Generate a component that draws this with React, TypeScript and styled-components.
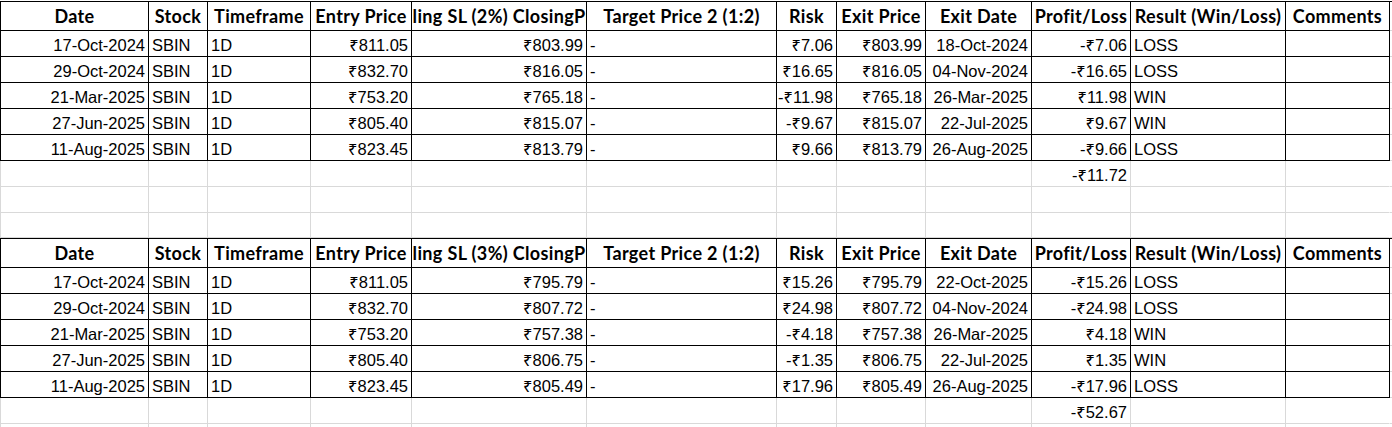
import styled, { createGlobalStyle } from "styled-components";

type Align = "left" | "right" | "center";
type Tone = "table" | "blank";

type Trade = {
  date: string;
  entry: string;
  stop: string;
  risk: string;
  exit: string;
  exitDate: string;
  pnl: string;
  result: string;
};

type Sheet = {
  stopLabel: string;
  trades: Trade[];
  total: string;
};

const COLUMNS = [148, 59, 103, 101, 175, 190, 60, 89, 106, 99, 155, 104];
const GRID = `${COLUMNS.map((w) => `${w}px`).join(" ")} 1fr`;
const GRID_LINE = "#d9d9d9";

const HEADERS = [
  "Date",
  "Stock",
  "Timeframe",
  "Entry Price",
  "",
  "Target Price 2 (1:2)",
  "Risk",
  "Exit Price",
  "Exit Date",
  "Profit/Loss",
  "Result (Win/Loss)",
  "Comments",
];

const SHEETS: Sheet[] = [
  {
    stopLabel: "Trailing SL (2%) ClosingPrice",
    total: "-₹11.72",
    trades: [
      { date: "17-Oct-2024", entry: "₹811.05", stop: "₹803.99", risk: "₹7.06", exit: "₹803.99", exitDate: "18-Oct-2024", pnl: "-₹7.06", result: "LOSS" },
      { date: "29-Oct-2024", entry: "₹832.70", stop: "₹816.05", risk: "₹16.65", exit: "₹816.05", exitDate: "04-Nov-2024", pnl: "-₹16.65", result: "LOSS" },
      { date: "21-Mar-2025", entry: "₹753.20", stop: "₹765.18", risk: "-₹11.98", exit: "₹765.18", exitDate: "26-Mar-2025", pnl: "₹11.98", result: "WIN" },
      { date: "27-Jun-2025", entry: "₹805.40", stop: "₹815.07", risk: "-₹9.67", exit: "₹815.07", exitDate: "22-Jul-2025", pnl: "₹9.67", result: "WIN" },
      { date: "11-Aug-2025", entry: "₹823.45", stop: "₹813.79", risk: "₹9.66", exit: "₹813.79", exitDate: "26-Aug-2025", pnl: "-₹9.66", result: "LOSS" },
    ],
  },
  {
    stopLabel: "Trailing SL (3%) ClosingPrice",
    total: "-₹52.67",
    trades: [
      { date: "17-Oct-2024", entry: "₹811.05", stop: "₹795.79", risk: "₹15.26", exit: "₹795.79", exitDate: "22-Oct-2025", pnl: "-₹15.26", result: "LOSS" },
      { date: "29-Oct-2024", entry: "₹832.70", stop: "₹807.72", risk: "₹24.98", exit: "₹807.72", exitDate: "04-Nov-2024", pnl: "-₹24.98", result: "LOSS" },
      { date: "21-Mar-2025", entry: "₹753.20", stop: "₹757.38", risk: "-₹4.18", exit: "₹757.38", exitDate: "26-Mar-2025", pnl: "₹4.18", result: "WIN" },
      { date: "27-Jun-2025", entry: "₹805.40", stop: "₹806.75", risk: "-₹1.35", exit: "₹806.75", exitDate: "22-Jul-2025", pnl: "₹1.35", result: "WIN" },
      { date: "11-Aug-2025", entry: "₹823.45", stop: "₹805.49", risk: "₹17.96", exit: "₹805.49", exitDate: "26-Aug-2025", pnl: "-₹17.96", result: "LOSS" },
    ],
  },
];

const GlobalStyle = createGlobalStyle`
  html, body {
    margin: 0;
    background: #fff;
    overflow: hidden;
  }
`;

const StyledSheet = styled.div`
  display: flex;
  flex-direction: column;
  width: 1392px;
  padding-top: 1px;
  background: #fff;
`;

const StyledTable = styled.div`
  display: flex;
  flex-direction: column;
  flex-shrink: 0;
  border-top: 1px solid #000;
`;

const StyledRow = styled.div<{ $tone: Tone; $height: number }>`
  display: grid;
  flex-shrink: 0;
  grid-template-columns: ${GRID};
  height: ${({ $height }) => $height}px;
  border-left: 1px solid ${({ $tone }) => ($tone === "table" ? "#000" : GRID_LINE)};
`;

const StyledCell = styled.div<{ $tone: Tone; $align: Align; $open?: boolean }>`
  display: flex;
  align-items: flex-end;
  justify-content: ${({ $align }) =>
    $align === "left" ? "flex-start" : $align === "right" ? "flex-end" : "center"};
  box-sizing: border-box;
  min-width: 0;
  padding: 0 3px 1px;
  border-right: 1px solid
    ${({ $tone, $open }) => ($open ? "transparent" : $tone === "table" ? "#000" : GRID_LINE)};
  border-bottom: 1px solid ${({ $tone }) => ($tone === "table" ? "#000" : GRID_LINE)};
  font-family: "Liberation Sans", "Noto Sans", Arial, sans-serif;
  font-size: 16.5px;
  line-height: 20px;
  color: #000;
  white-space: nowrap;
`;

const StyledHeadCell = styled(StyledCell)`
  overflow: hidden;
  padding: 0 0 3px;
  font-family: Lato, "DejaVu Sans", sans-serif;
  font-weight: 700;
  font-size: 18px;
  line-height: 22px;
  letter-spacing: 0.35px;
`;

const StyledFiller = styled.div`
  border-bottom: 1px solid ${GRID_LINE};
`;

const BlankRow = ({ height = 26, total }: { height?: number; total?: string }) => (
  <StyledRow $tone="blank" $height={height}>
    {COLUMNS.map((_, i) => (
      <StyledCell key={i} $tone="blank" $align="right" $open={i === COLUMNS.length - 1}>
        {i === 9 ? total : null}
      </StyledCell>
    ))}
    <StyledFiller />
  </StyledRow>
);

const TradeRow = ({ trade }: { trade: Trade }) => {
  const cells: [string, Align][] = [
    [trade.date, "right"],
    ["SBIN", "left"],
    ["1D", "left"],
    [trade.entry, "right"],
    [trade.stop, "right"],
    ["-", "left"],
    [trade.risk, "right"],
    [trade.exit, "right"],
    [trade.exitDate, "right"],
    [trade.pnl, "right"],
    [trade.result, "left"],
    ["", "left"],
  ];

  return (
    <StyledRow $tone="table" $height={26}>
      {cells.map(([value, align], i) => (
        <StyledCell key={i} $tone="table" $align={align}>
          {value}
        </StyledCell>
      ))}
      <StyledFiller />
    </StyledRow>
  );
};

const TradeTable = ({ sheet }: { sheet: Sheet }) => (
  <StyledTable>
    <StyledRow $tone="table" $height={29}>
      {HEADERS.map((label, i) => (
        <StyledHeadCell key={i} $tone="table" $align="center">
          {label || sheet.stopLabel}
        </StyledHeadCell>
      ))}
      <StyledFiller />
    </StyledRow>
    {sheet.trades.map((trade) => (
      <TradeRow key={trade.date} trade={trade} />
    ))}
  </StyledTable>
);

const App = () => (
  <>
    <GlobalStyle />
    <StyledSheet>
      <TradeTable sheet={SHEETS[0]} />
      <BlankRow total={SHEETS[0].total} />
      <BlankRow />
      <BlankRow height={25} />
      <TradeTable sheet={SHEETS[1]} />
      <BlankRow total={SHEETS[1].total} />
      <BlankRow height={4} />
    </StyledSheet>
  </>
);

export default App;
